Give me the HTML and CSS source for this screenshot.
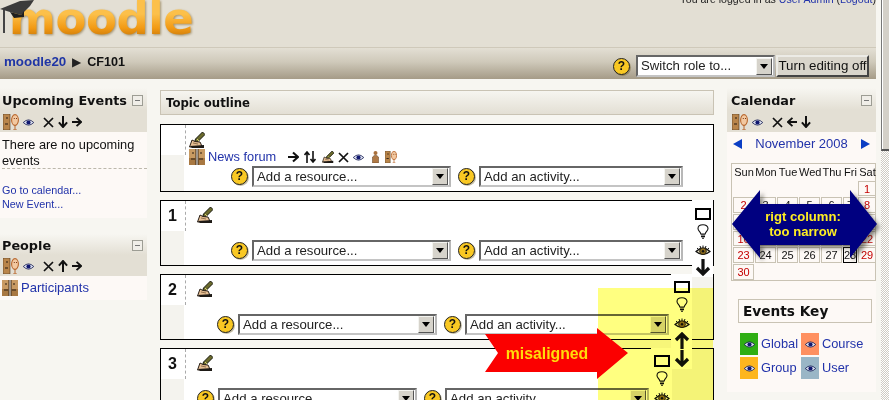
FILE: index.html
```html
<!DOCTYPE html>
<html lang="en">
<head>
<meta charset="utf-8">
<title>CF101</title>
<link rel="stylesheet" href="styles.css">
</head>
<body>
<svg class="defs" aria-hidden="true">
  <symbol id="i-edit" viewBox="0 0 16 16">
    <path d="M13.5 0 L16 2.5 L9 9.5 L5.5 10.5 L6.5 7 Z" fill="#6a6a2c" stroke="#17170c" stroke-width="1"/>
    <path d="M8 7 L10 9" stroke="#d8d070" stroke-width="1"/>
    <path d="M0.5 15 L3 8 L6 9.5 L11 10 L12 12 L13 15 Z" fill="#e6bf94" stroke="#2a2018" stroke-width="1"/>
    <path d="M1 14 L15 13 L15 16 L3 16 Z" fill="#1e1a16"/>
    <path d="M4 11 L9 12" stroke="#7b5a3a" stroke-width=".8"/>
  </symbol>
  <symbol id="i-group" viewBox="0 0 16 16">
    <path d="M0 0 H7 V16 H0 Z" fill="#c89a62"/>
    <path d="M9 0 H16 V16 H9 Z" fill="#c89a62"/>
    <path d="M0 9 H7 V16 H0 Z M9 9 H16 V16 H9 Z" fill="#a87842"/>
    <path d="M7 0 V16 M9 0 V16" stroke="#3c2a18" stroke-width="1"/>
    <path d="M3 4 H5 M11 4 H13 M2 10 H6 M10 10 H14" stroke="#2a1c10" stroke-width="1.2"/>
  </symbol>
  <symbol id="i-groups" viewBox="0 0 16 16">
    <path d="M0 0 H7 V16 H0 Z" fill="#b9854a" stroke="#4a3520" stroke-width=".6"/>
    <path d="M3 4 H5 M2 10 H5" stroke="#2a1c10" stroke-width="1.2"/>
    <ellipse cx="12" cy="6" rx="3.4" ry="5.4" fill="#f2c8a0" stroke="#b8662c" stroke-width="1.1"/>
    <path d="M12 11 V16 M10 16 H14" stroke="#b8662c" stroke-width="1"/>
    <path d="M10.8 4.5 H11.8 M13 4.5 H14" stroke="#7a3a18" stroke-width="1"/>
  </symbol>
  <symbol id="i-eye" viewBox="0 0 12 8">
    <path d="M0 4 Q6 -2 12 4 Q6 10 0 4 Z" fill="#dfe3f0" stroke="#101850" stroke-width=".9"/>
    <circle cx="6" cy="4" r="2.4" fill="#101870"/>
  </symbol>
  <symbol id="i-x" viewBox="0 0 11 11">
    <path d="M1 1 L10 10 M10 1 L1 10" stroke="#111" stroke-width="1.7"/>
  </symbol>
  <symbol id="i-down" viewBox="0 0 11 13">
    <path d="M5.5 0 V11 M1 7 L5.5 12 L10 7" fill="none" stroke="#111" stroke-width="2.2"/>
  </symbol>
  <symbol id="i-up" viewBox="0 0 11 13">
    <path d="M5.5 13 V2 M1 6 L5.5 1 L10 6" fill="none" stroke="#111" stroke-width="2.2"/>
  </symbol>
  <symbol id="i-right" viewBox="0 0 11 11">
    <path d="M0 5.5 H9 M5 1 L10 5.5 L5 10" fill="none" stroke="#111" stroke-width="2.1"/>
  </symbol>
  <symbol id="i-left" viewBox="0 0 11 11">
    <path d="M11 5.5 H2 M6 1 L1 5.5 L6 10" fill="none" stroke="#111" stroke-width="2.1"/>
  </symbol>
  <symbol id="i-updown" viewBox="0 0 12 12">
    <path d="M3 12 V1 M0.5 4 L3 1 L5.5 4 M9 0 V11 M6.5 8 L9 11 L11.5 8" fill="none" stroke="#111" stroke-width="1.6"/>
  </symbol>
  <symbol id="i-person" viewBox="0 0 7 12">
    <circle cx="3.5" cy="2" r="2" fill="#a8703c"/>
    <path d="M0.5 12 V6 Q3.5 2.5 6.5 6 V12 Z" fill="#b07a46" stroke="#5a3a1c" stroke-width=".5"/>
  </symbol>
  <symbol id="i-bulb" viewBox="0 0 12 15">
    <path d="M3.8 10 C3.6 7.5 1 7 1 4.5 C1 2 3.2 .8 6 .8 C8.8 .8 11 2 11 4.5 C11 7 8.4 7.5 8.2 10 Z" fill="#fff" stroke="#111" stroke-width="1.1"/>
    <path d="M4 11 H8 M4 12.6 H8 M5 14.2 H7" stroke="#111" stroke-width="1.1"/>
  </symbol>
  <symbol id="i-bigeye" viewBox="0 0 16 12">
    <path d="M1 6.5 Q8 0 15 6.5 Q8 12.5 1 6.5 Z" fill="#efe9c8" stroke="#111" stroke-width="1.2"/>
    <circle cx="8" cy="6.2" r="3.4" fill="#8a6a1c" stroke="#111" stroke-width=".8"/>
    <circle cx="8" cy="6.2" r="1.2" fill="#111"/>
    <path d="M2 3 L3.5 4.4 M5 1 L5.8 3 M8 .5 V2.5 M11 1 L10.2 3 M14 3 L12.5 4.4" stroke="#111" stroke-width="1"/>
  </symbol>
  <symbol id="i-bigup" viewBox="0 0 16 17">
    <path d="M8 17 V3 M2 8 L8 2 L14 8" fill="none" stroke="#111" stroke-width="3.2"/>
  </symbol>
  <symbol id="i-bigdown" viewBox="0 0 16 17">
    <path d="M8 0 V14 M2 9 L8 15 L14 9" fill="none" stroke="#111" stroke-width="3.2"/>
  </symbol>
</svg>

<div class="window">
  <div class="page">
    <header class="header">
      <div class="logo">
        <svg class="hat" viewBox="0 0 34 34" aria-hidden="true">
          <path d="M0 9 L20 1 L34 0 L30 6 L21 15 L10 12 Z" fill="#3b3b3b"/>
          <path d="M10 12 L21 15 L24 11 L24 17 L14 18 Z" fill="#1f1f1f"/>
          <path d="M4 10 V33" stroke="#444" stroke-width="2"/>
        </svg>
        <span class="logo-text">moodle</span>
      </div>
      <div class="login">You are logged in as <a href="#">User Admin</a> (<a href="#">Logout</a>)</div>
    </header>

    <nav class="navbar">
      <div class="crumbs"><a href="#">moodle20</a> <span class="sep">&#9654;</span> <span class="here">CF101</span></div>
      <div class="nav-tools">
        <span class="help">?</span>
        <div class="sel sel-role"><span>Switch role to...</span><i class="sel-btn"></i></div>
        <button class="btn" type="button">Turn editing off</button>
      </div>
    </nav>

    <div class="columns">
      <aside class="col-left">
        <section class="block">
          <div class="block-head">
            <div class="block-title"><span>Upcoming Events</span><i class="collapse"></i></div>
            <div class="tools">
              <svg class="t-groups"><use href="#i-groups"/></svg><svg class="t-eye"><use href="#i-eye"/></svg><svg class="t-x"><use href="#i-x"/></svg><svg class="t-arrow"><use href="#i-down"/></svg><svg class="t-arrow"><use href="#i-right"/></svg>
            </div>
          </div>
          <div class="block-body body-events">
            <p class="no-events">There are no upcoming events</p>
            <div class="small-links">
              <a href="#">Go to calendar...</a>
              <a href="#">New Event...</a>
            </div>
          </div>
        </section>
        <section class="block block-people">
          <div class="block-head">
            <div class="block-title"><span>People</span><i class="collapse"></i></div>
            <div class="tools">
              <svg class="t-groups"><use href="#i-groups"/></svg><svg class="t-eye"><use href="#i-eye"/></svg><svg class="t-x"><use href="#i-x"/></svg><svg class="t-arrow"><use href="#i-up"/></svg><svg class="t-arrow"><use href="#i-right"/></svg>
            </div>
          </div>
          <div class="block-body body-people">
            <svg class="i16"><use href="#i-group"/></svg><a href="#">Participants</a>
          </div>
        </section>
      </aside>

      <main class="col-mid">
        <h2 class="outline">Topic outline</h2>

        <section class="sec sec-0">
          <div class="side"><div class="side-top"></div><div class="side-bot"></div></div>
          <div class="sec-main">
            <svg class="i16 pencil"><use href="#i-edit"/></svg>
            <div class="news">
              <svg class="i16"><use href="#i-group"/></svg><a href="#">News forum</a>
              <span class="news-tools">
                <svg class="t-arrow"><use href="#i-right"/></svg><svg class="t-ud"><use href="#i-updown"/></svg><svg class="t-e"><use href="#i-edit"/></svg><svg class="t-x"><use href="#i-x"/></svg><svg class="t-eye"><use href="#i-eye"/></svg><svg class="t-p"><use href="#i-person"/></svg><svg class="t-g"><use href="#i-groups"/></svg>
              </span>
            </div>
            <div class="add">
              <span class="help">?</span>
              <div class="sel sel-a"><span>Add a resource...</span><i class="sel-btn"></i></div>
              <span class="help help-2">?</span>
              <div class="sel sel-b"><span>Add an activity...</span><i class="sel-btn"></i></div>
            </div>
          </div>
        </section>

        <section class="sec sec-1">
          <div class="side"><div class="side-top">1</div><div class="side-bot"></div></div>
          <div class="sec-main">
            <svg class="i16 pencil"><use href="#i-edit"/></svg>
            <div class="add">
              <span class="help">?</span>
              <div class="sel sel-a"><span>Add a resource...</span><i class="sel-btn"></i></div>
              <span class="help help-2">?</span>
              <div class="sel sel-b"><span>Add an activity...</span><i class="sel-btn"></i></div>
            </div>
          </div>
          <div class="right">
            <i class="box"></i><svg class="bulb"><use href="#i-bulb"/></svg><svg class="bigeye"><use href="#i-bigeye"/></svg><svg class="bigarrow"><use href="#i-bigdown"/></svg>
          </div>
        </section>

        <section class="sec sec-2">
          <div class="side"><div class="side-top">2</div><div class="side-bot"></div></div>
          <div class="sec-main">
            <svg class="i16 pencil"><use href="#i-edit"/></svg>
            <div class="add">
              <span class="help">?</span>
              <div class="sel sel-a"><span>Add a resource...</span><i class="sel-btn"></i></div>
              <span class="help help-2">?</span>
              <div class="sel sel-b"><span>Add an activity...</span><i class="sel-btn"></i></div>
            </div>
          </div>
          <div class="right">
            <i class="box"></i><svg class="bulb"><use href="#i-bulb"/></svg><svg class="bigeye"><use href="#i-bigeye"/></svg><svg class="bigarrow"><use href="#i-bigup"/></svg><svg class="bigarrow tight"><use href="#i-bigdown"/></svg>
          </div>
        </section>

        <section class="sec sec-3">
          <div class="side"><div class="side-top">3</div><div class="side-bot"></div></div>
          <div class="sec-main">
            <svg class="i16 pencil"><use href="#i-edit"/></svg>
            <div class="add">
              <span class="help">?</span>
              <div class="sel sel-a"><span>Add a resource...</span><i class="sel-btn"></i></div>
              <span class="help help-2">?</span>
              <div class="sel sel-b"><span>Add an activity...</span><i class="sel-btn"></i></div>
            </div>
          </div>
          <div class="right">
            <i class="box"></i><svg class="bulb"><use href="#i-bulb"/></svg><svg class="bigeye"><use href="#i-bigeye"/></svg>
          </div>
        </section>
      </main>

      <aside class="col-right">
        <section class="block">
          <div class="block-head">
            <div class="block-title"><span>Calendar</span><i class="collapse"></i></div>
            <div class="tools">
              <svg class="t-groups"><use href="#i-groups"/></svg><svg class="t-eye"><use href="#i-eye"/></svg><svg class="t-x"><use href="#i-x"/></svg><svg class="t-arrow"><use href="#i-left"/></svg><svg class="t-arrow"><use href="#i-down"/></svg>
            </div>
          </div>
          <div class="block-body body-cal">
            <div class="month"><i class="tri tri-l"></i><a href="#">November 2008</a><i class="tri tri-r"></i></div>
            <div class="cal">
              <b>Sun</b><b>Mon</b><b>Tue</b><b>Wed</b><b>Thu</b><b>Fri</b><b>Sat</b>
              <span class="none"></span><span class="none"></span><span class="none"></span><span class="none"></span><span class="none"></span><span class="none"></span><span class="we">1</span>
              <span class="we">2</span><span>3</span><span>4</span><span>5</span><span>6</span><span>7</span><span class="we">8</span>
              <span class="we">9</span><span>10</span><span>11</span><span>12</span><span>13</span><span>14</span><span class="we">15</span>
              <span class="we">16</span><span>17</span><span>18</span><span>19</span><span>20</span><span>21</span><span class="we">22</span>
              <span class="we">23</span><span>24</span><span>25</span><span>26</span><span>27</span><span class="today">28</span><span class="we">29</span>
              <span class="we">30</span>
            </div>
            <div class="key-head">Events Key</div>
            <div class="key">
              <i class="sw sw-g"><svg class="t-eye"><use href="#i-eye"/></svg></i><a href="#">Global</a>
              <i class="sw sw-c"><svg class="t-eye"><use href="#i-eye"/></svg></i><a href="#">Course</a>
              <i class="sw sw-o"><svg class="t-eye"><use href="#i-eye"/></svg></i><a href="#">Group</a>
              <i class="sw sw-u"><svg class="t-eye"><use href="#i-eye"/></svg></i><a href="#">User</a>
            </div>
          </div>
        </section>
      </aside>
    </div>
  </div>
  <div class="scrollbar"><div class="thumb"></div></div>

  <div class="yellow"></div>
  <div class="callout callout-red">
    <svg viewBox="0 0 143 51" aria-hidden="true"><polygon points="0,6 112,6 112,0 143,25 112,51 112,44 0,44 13,25" fill="#fb0000"/></svg>
    <span>misaligned</span>
  </div>
  <div class="callout callout-blue">
    <svg viewBox="0 0 152 76" aria-hidden="true">
      <polygon points="1,34 29,0 29,14 119,14 119,0 146,34 119,68 119,55 29,55 29,68" fill="#000080"/>
    </svg>
    <span>rigt column:<br>too narrow</span>
  </div>
</div>
</body>
</html>
```

FILE: styles.css
```css
* { box-sizing: border-box; }
html, body { margin: 0; padding: 0; height: 400px; overflow: hidden; }
body { background: #f7f6f1; color: #111; font: 13px/16px "Liberation Sans", Arial, sans-serif; }
a { color: #2233aa; text-decoration: none; }
.defs { position: absolute; width: 0; height: 0; }
svg { display: block; flex: none; }

.window { position: relative; display: flex; height: 400px; width: 889px; overflow: hidden; }
.page { width: 876px; margin-right: 5px; flex: none; }

/* header */
.header { height: 48px; background: #e3dfd4; display: flex; justify-content: space-between; overflow: hidden; border-bottom: 1px solid #cfc9ba; }
.logo { position: relative; width: 200px; height: 47px; }
.hat { position: absolute; left: 0; top: 0; width: 34px; height: 34px; z-index: 1; }
.logo-text { display: block; margin: -16px 0 0 9px; font: bold 45px/70px "DejaVu Sans", sans-serif; letter-spacing: -.4px; background: linear-gradient(#fcc04a 30px, #f29a14 44px, #c47407 55px); -webkit-background-clip: text; background-clip: text; color: transparent; filter: drop-shadow(1px 1px 1px rgba(110, 80, 20, .55)); }
.login { font-size: 10.6px; line-height: 13px; margin-top: -7px; color: #222; white-space: nowrap; }

/* nav */
.navbar { height: 31px; background: linear-gradient(#e3dfd4, #cfc9ba 45%, #a59b87); display: flex; justify-content: space-between; padding: 7px 7px 0 4px; }
.crumbs { font-weight: bold; font-size: 13.33px; line-height: 16px; color: #111; display: flex; gap: 6px; margin-top: -1px; }
.crumbs .sep { font-weight: normal; font-size: 12px; color: #222; }
.crumbs .here { font-size: 12.6px; }
.crumbs a { color: #1f35a5; }
.nav-tools { display: flex; align-items: flex-start; }
.nav-tools .help { margin: 3px 6px 0 0; }
.help { flex: none; width: 17px; height: 17px; border-radius: 50%; background: #f9c823; border: 1px solid #222; color: #111; font: bold 12px/15px "Liberation Sans", sans-serif; text-align: center; box-shadow: 1px 1px 0 rgba(90, 70, 0, .35); }
.sel { display: flex; align-items: center; justify-content: space-between; height: 21px; background: #fff; border: 2px solid; border-color: #666 #b8b8b8 #c4c4c4 #666; padding: 0 1px 0 3px; font-size: 13.2px; color: #222; flex: none; }
.sel-btn { width: 16px; height: 17px; background: #d6d3cb; border: 1px solid; border-color: #f4f4f0 #555 #555 #f4f4f0; position: relative; flex: none; }
.sel-btn::after { content: ""; position: absolute; left: 3px; top: 5px; border: 4px solid transparent; border-top: 5px solid #000; border-bottom: 0; }
.sel-role { width: 139px; height: 22px; }
.btn { width: 93px; height: 22px; margin-left: 1px; padding: 0; background: #d9d5cb; border: 2px solid; border-color: #ecebe6 #444 #444 #ecebe6; font: 13.33px/16px "Liberation Sans", sans-serif; color: #111; }

/* columns */
.columns { display: grid; grid-template-columns: 147px 554px 149px; column-gap: 13px; padding-top: 9px; }
.block-head { background: linear-gradient(#f7f6f1, #e3dfd4 50%); padding: 5px 3px 0 2px; height: 44px; }
.block-title { display: flex; justify-content: space-between; align-items: flex-start; font: bold 12.8px/15px "DejaVu Sans", sans-serif; color: #111; white-space: nowrap; }
.col-right .block-head { padding-left: 4px; }
.collapse { width: 11px; height: 11px; margin: 2px 1px 0 0; border: 1px solid #9d9d94; background: #f0eee8; position: relative; flex: none; }
.collapse::after { content: ""; position: absolute; left: 2px; right: 2px; top: 4px; height: 1px; background: #777; }
.tools { display: flex; align-items: center; margin-top: 6px; height: 16px; padding-left: 1px; }
.t-groups { width: 16px; height: 16px; margin-right: 4px; }
.t-eye { width: 11px; height: 7px; }
.tools .t-eye { margin-right: 9px; }
.t-x { width: 11px; height: 11px; }
.tools .t-x { margin-right: 4px; }
.t-arrow { width: 10px; height: 12px; }
.tools .t-arrow { margin-right: 4px; }
.block-body { background: #fdf9f6; }
.body-events { height: 86px; padding: 4px 0 0 2px; }
.no-events { margin: 1px 0 0; border-bottom: 1px dashed #bcb8ac; height: 32px; font-size: 12.8px; }
.small-links { margin-top: 14px; font-size: 10.8px; line-height: 14px; display: flex; flex-direction: column; }
.block-people { margin-top: 16px; }
.block-people .block-head { height: 42px; padding-top: 4px; }
.block-people .tools { margin-top: 5px; }
.body-people { height: 24px; display: flex; align-items: center; gap: 3px; padding-left: 2px; }
.i16 { width: 16px; height: 16px; }

/* middle */
.col-mid { padding-top: 2px; }
.outline { margin: 0 0 9px; height: 25px; border: 1px solid #c9c3b4; background: linear-gradient(#f6f5f0, #e3dfd4); font: bold 11.7px/24px "DejaVu Sans", sans-serif; padding-left: 5px; color: #111; }
.sec { display: flex; height: 66px; border: 1px solid #000; margin-bottom: 8px; background: #f4f3ee; }
.sec-0 { height: 68px; }
.side { width: 25px; display: flex; flex-direction: column; background: #fff; flex: none; }
.side-top { height: 30px; border-right: 1px dashed #aaa; background: #fff; font: bold 16px/30px "Liberation Sans", sans-serif; padding-left: 7px; }
.side-bot { flex: 1; width: 23px; background: #f4f3ee; }
.sec-main { flex: 1; background: #fff; display: flex; flex-direction: column; padding: 6px 9px 4px 11px; }
.sec-0 .sec-main { padding: 7px 30px 4px 3px; }
.sec-2 .sec-main, .sec-3 .sec-main { padding-right: 2px; }
.news { display: flex; align-items: center; gap: 3px; margin-top: 1px; height: 16px; font-size: 12.8px; }
.news-tools { display: flex; align-items: center; margin-left: 9px; }
.news-tools .t-arrow { width: 11px; margin-right: 5px; }
.t-ud { width: 12px; height: 12px; margin-right: 6px; }
.t-e { width: 12px; height: 12px; margin-right: 4px; }
.news-tools .t-x { margin-right: 4px; }
.news-tools .t-eye { margin-right: 8px; }
.t-p { width: 7px; height: 12px; margin-right: 6px; }
.t-g { width: 12px; height: 12px; }
.add { margin-top: auto; display: flex; align-items: center; justify-content: flex-end; }
.add .help { margin-right: 4px; }
.help-2 { margin-left: 7px; }
.sel-a { width: 199px; }
.sel-b { width: 204px; }
.right { position: relative; z-index: 2; width: 21px; margin-top: -1px; background: #fff; display: flex; flex-direction: column; align-items: center; padding-top: 8px; flex: none; align-self: flex-start; }
.sec-1 .right { height: 77px; }
.sec-2 .right { margin-right: 21px; height: 95px; padding-top: 7px; }
.sec-3 .right { margin-right: 42px; padding-top: 7px; height: 70px; }
.box { width: 16px; height: 12px; border: 2px solid #000; flex: none; }
.bulb { width: 12px; height: 15px; margin-top: 4px; }
.bigeye { width: 16px; height: 12px; margin-top: 6px; }
.bigarrow { width: 16px; height: 17px; margin-top: 2px; }
.bigarrow.tight { margin-top: 1px; }

/* right */
.body-cal { height: 260px; padding: 4px 0 0 4px; }
.month { display: flex; justify-content: space-between; align-items: center; height: 16px; padding: 0 6px 0 2px; font-size: 13px; }
.tri { width: 0; height: 0; border: 5px solid transparent; }
.tri-l { border-left: 0; border-right: 9px solid #0b3ec4; }
.tri-r { border-right: 0; border-left: 9px solid #0b3ec4; }
.cal { display: grid; grid-template-columns: 22px 22px 22px 22px 22px 15px 19px; grid-auto-rows: 16.7px; margin-top: 11px; border: 1px solid #c9c3b4; height: 118px; width: 145px; padding: 0 0 0 1px; font-size: 11px; text-align: center; }
.cal b { font: 11px/16px "Liberation Sans", sans-serif; white-space: nowrap; }
.cal span { border: 1px solid #c9c3b4; line-height: 14px; margin: 0 1px 1px 0; }
.cal span.none { border: 0; }
.cal .we { color: #c40000; }
.cal .today { border-color: #000; }
.key-head { margin: 18px 0 0 7px; width: 134px; height: 24px; border: 1px solid #c9c3b4; font: bold 13.7px/22px "DejaVu Sans", sans-serif; padding-left: 4px; color: #111; }
.key { display: grid; grid-template-columns: 18px 37px 18px auto; grid-auto-rows: 22px; row-gap: 2px; margin: 10px 0 0 9px; column-gap: 3px; align-items: center; font-size: 12.8px; width: 130px; }
.sw { height: 22px; display: flex; align-items: center; justify-content: center; }
.sw-g { background: #2fae14; }
.sw-c { background: #ff9060; }
.sw-o { background: #fdb61e; }
.sw-u { background: #9ab6c6; }

/* scrollbar */
.scrollbar { width: 8px; flex: none; background: repeating-conic-gradient(#fff 0 25%, #cfcbc2 0 50%) 0 0 / 2px 2px; }
.thumb { height: 151px; background: #d4d0c8; border-left: 1px solid #777; border-bottom: 2px solid #555; box-shadow: inset 1px 0 0 #fff; }

/* annotations */
.yellow { position: absolute; left: 598px; top: 288px; width: 115px; height: 112px; background: #ffff80; mix-blend-mode: multiply; z-index: 3; }
.callout { position: absolute; z-index: 4; display: flex; align-items: center; justify-content: center; text-align: center; font-weight: bold; }
.callout svg { position: absolute; inset: 0; width: 100%; height: 100%; }
.callout span { position: relative; color: #ffee22; }
.callout-red { left: 485px; top: 328px; width: 143px; height: 51px; padding-right: 19px; font-size: 15.8px; }
.callout-red span { color: #ffdc0a; }
.callout-blue { left: 731px; top: 190px; width: 152px; height: 76px; padding: 0 8px 8px 0; font-size: 13.1px; line-height: 15px; }
.callout-blue svg { filter: drop-shadow(3px 3px 2px rgba(40, 40, 30, .55)); }
```
